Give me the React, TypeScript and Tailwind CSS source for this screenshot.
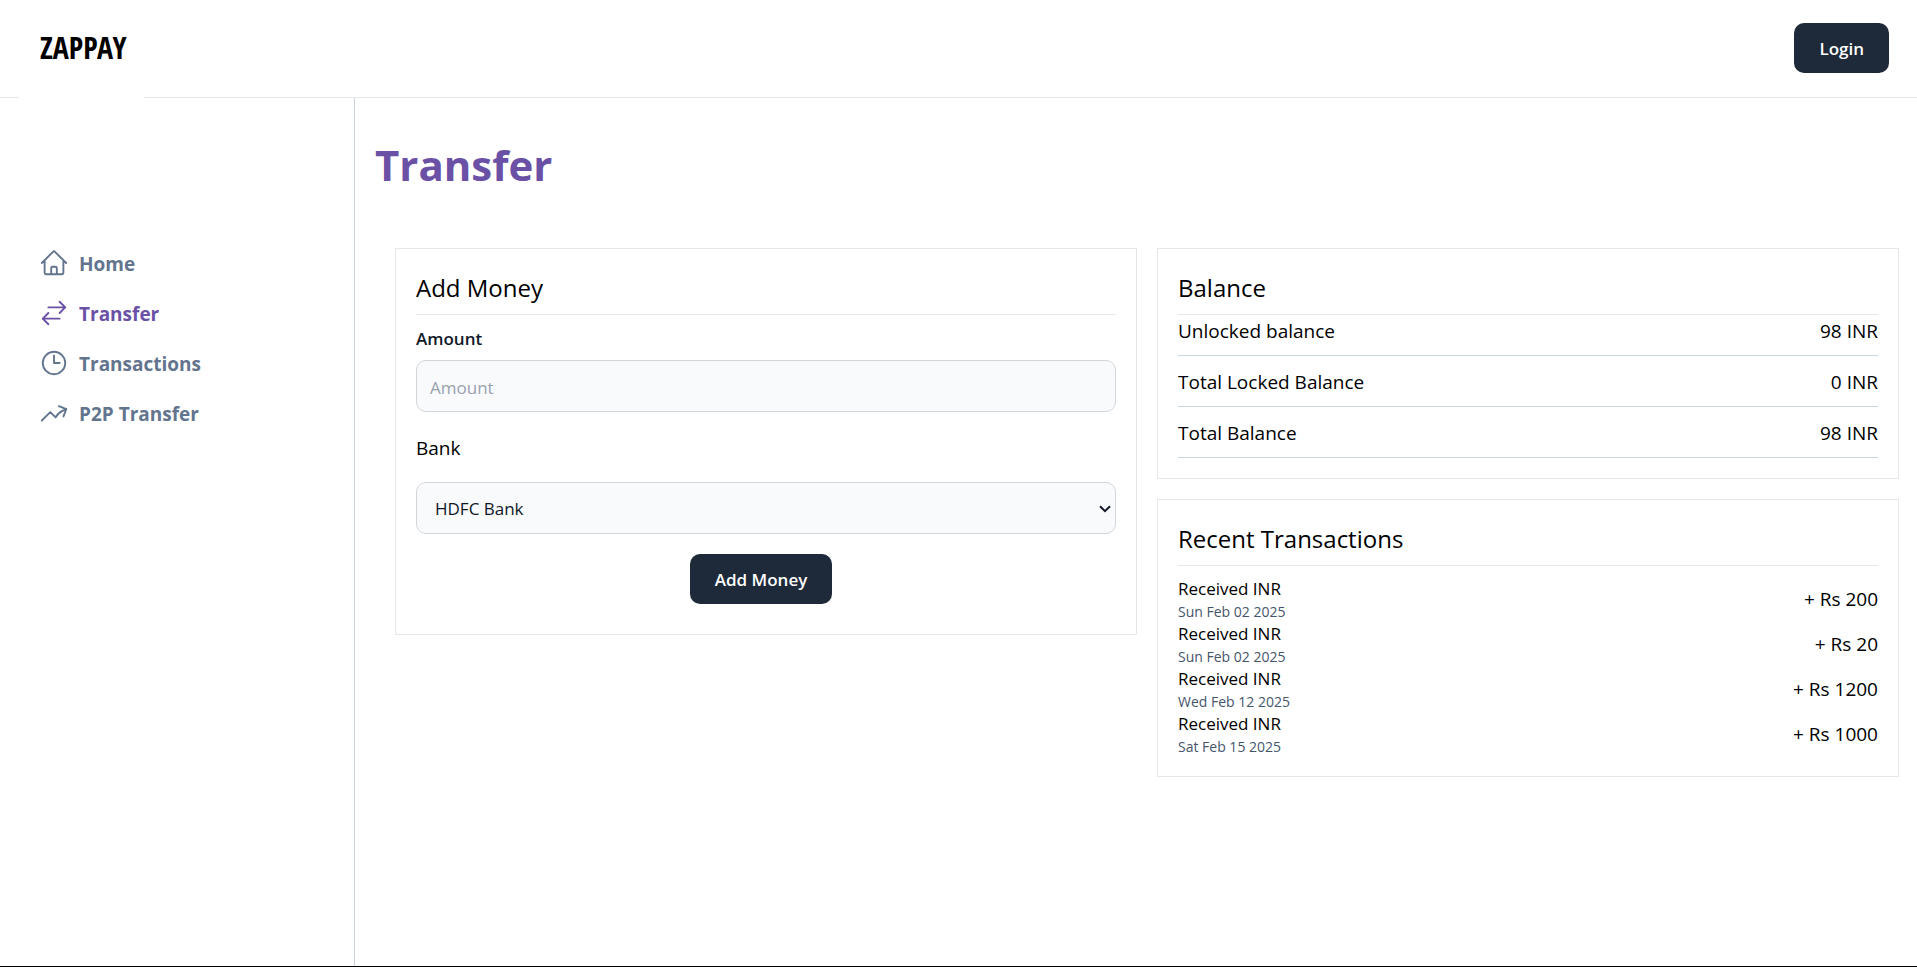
import type { ReactNode } from "react";

type NavItem = { label: string; path: string; active?: boolean };

const navItems: NavItem[] = [
  {
    label: "Home",
    path: "m2.25 12 8.954-8.955c.44-.439 1.152-.439 1.591 0L21.75 12M4.5 9.75v10.125c0 .621.504 1.125 1.125 1.125H9.75v-4.875c0-.621.504-1.125 1.125-1.125h2.25c.621 0 1.125.504 1.125 1.125V21h4.125c.621 0 1.125-.504 1.125-1.125V9.75M8.25 21h8.25",
  },
  {
    label: "Transfer",
    path: "M7.5 21 3 16.5m0 0L7.5 12M3 16.5h13.5m0-13.5L21 7.5m0 0L16.5 12M21 7.5H7.5",
    active: true,
  },
  {
    label: "Transactions",
    path: "M12 6v6h4.5m4.5 0a9 9 0 1 1-18 0 9 9 0 0 1 18 0Z",
  },
  {
    label: "P2P Transfer",
    path: "M2.25 18 9 11.25l4.306 4.306a11.95 11.95 0 0 1 5.814-5.518l2.74-1.22m0 0-5.94-2.281m5.94 2.28-2.28 5.941",
  },
];

const balances = [
  { label: "Unlocked balance", value: "98 INR" },
  { label: "Total Locked Balance", value: "0 INR" },
  { label: "Total Balance", value: "98 INR" },
];

const transactions = [
  { date: "Sun Feb 02 2025", amount: "+ Rs 200" },
  { date: "Sun Feb 02 2025", amount: "+ Rs 20" },
  { date: "Wed Feb 12 2025", amount: "+ Rs 1200" },
  { date: "Sat Feb 15 2025", amount: "+ Rs 1000" },
];

function Button({ children }: { children: ReactNode }) {
  return (
    <button
      type="button"
      className="me-2.5 rounded-[10px] bg-gray-800 px-[25px] pt-[13px] pb-[11px] text-[17px] leading-[26px] font-semibold text-white hover:bg-gray-900"
    >
      {children}
    </button>
  );
}

function Card({ title, children }: { title: string; children: ReactNode }) {
  return (
    <section className="border border-gray-200 p-5">
      <h2 className="border-b border-gray-200 pb-2 text-[24px] leading-[37px]">{title}</h2>
      {children}
    </section>
  );
}

function Sidebar() {
  return (
    <nav className="w-[355px] shrink-0 border-r border-slate-300 pt-35">
      {navItems.map((item) => (
        <a
          key={item.label}
          href="#"
          className={
            item.active
              ? "flex items-start gap-2.5 pt-2.5 pb-2 pl-[39px] text-[#6a51a6]"
              : "flex items-start gap-2.5 pt-2.5 pb-2 pl-[39px] text-slate-500"
          }
        >
          <svg
            viewBox="0 0 24 24"
            className="size-[30px]"
            fill="none"
            stroke="currentColor"
            strokeWidth={1.5}
            strokeLinecap="round"
            strokeLinejoin="round"
            aria-hidden="true"
          >
            <path d={item.path} />
          </svg>
          <span className="text-[19px] leading-[32px] font-bold">{item.label}</span>
        </a>
      ))}
    </nav>
  );
}

function AddMoney() {
  return (
    <Card title="Add Money">
      <form className="flex flex-col" onSubmit={(e) => e.preventDefault()}>
        <label htmlFor="amount" className="pt-2.5 pb-2 text-[17px] leading-[27px] font-semibold text-gray-900">
          Amount
        </label>
        <input
          id="amount"
          type="text"
          placeholder="Amount"
          className="h-[52px] w-full rounded-[10px] border border-gray-300 bg-gray-50 px-[13px] pt-0.5 text-[17px] text-gray-900 placeholder:text-gray-400"
        />
        <label htmlFor="bank" className="pt-5 pb-[18px] text-[19px] leading-[32px]">
          Bank
        </label>
        <div className="relative">
          <select
            id="bank"
            className="h-[52px] w-full appearance-none rounded-[10px] border border-gray-300 bg-gray-50 pt-0.5 pl-[18px] text-[17px] text-gray-900"
          >
            <option>HDFC Bank</option>
            <option>Axis Bank</option>
          </select>
          <svg
            viewBox="0 0 12 8"
            className="pointer-events-none absolute top-[23px] right-[5px] h-2 w-3"
            fill="none"
            stroke="#111827"
            strokeWidth={2}
            aria-hidden="true"
          >
            <path d="M1 1.2 6 6.2 11 1.2" />
          </svg>
        </div>
        <div className="flex justify-center pt-5 pb-2.5">
          <Button>Add Money</Button>
        </div>
      </form>
    </Card>
  );
}

function Balance() {
  return (
    <Card title="Balance">
      <dl className="flex flex-col gap-2.5">
        {balances.map((row) => (
          <div
            key={row.label}
            className="flex justify-between border-b border-slate-300 pb-2 text-[19px] leading-[32px]"
          >
            <dt>{row.label}</dt>
            <dd>{row.value}</dd>
          </div>
        ))}
      </dl>
    </Card>
  );
}

function RecentTransactions() {
  return (
    <Card title="Recent Transactions">
      <ul className="pt-2.5">
        {transactions.map((t) => (
          <li key={t.date + t.amount} className="flex items-center justify-between">
            <div>
              <div className="text-[17px] leading-[26px]">Received INR</div>
              <div className="text-[14px] leading-[19px] text-slate-600">{t.date}</div>
            </div>
            <div className="text-[19px] leading-[32px]">{t.amount}</div>
          </li>
        ))}
      </ul>
    </Card>
  );
}

export default function App() {
  return (
    <div className="flex min-h-screen flex-col border-b border-black bg-white font-['Open_Sans','Noto_Sans',sans-serif] text-black">
      <header className="flex h-[98px] items-center justify-between border-b border-gray-200 pr-[18px] pb-0.5 pl-[19px]">
        <a
          href="#"
          className="z-10 -mb-1 flex h-[100px] w-[125px] items-center bg-white pb-1 pl-[21px] font-['Noto_Sans_ExtraCondensed','Noto_Sans_Condensed','Open_Sans_Condensed','Roboto_Condensed','Liberation_Sans_Narrow',sans-serif] text-[30px] font-black text-black"
        >
          ZAPPAY
        </a>
        <Button>Login</Button>
      </header>
      <div className="flex flex-1">
        <Sidebar />
        <main className="min-w-0 flex-1 pt-[42px] pr-[18px] pl-5">
          <h1 className="text-[42px] leading-[50px] font-bold text-[#6a51a6]">Transfer</h1>
          <div className="mt-[58px] grid grid-cols-1 items-start gap-5 pl-5 lg:grid-cols-2">
            <AddMoney />
            <div className="flex flex-col gap-5">
              <Balance />
              <RecentTransactions />
            </div>
          </div>
        </main>
      </div>
    </div>
  );
}
